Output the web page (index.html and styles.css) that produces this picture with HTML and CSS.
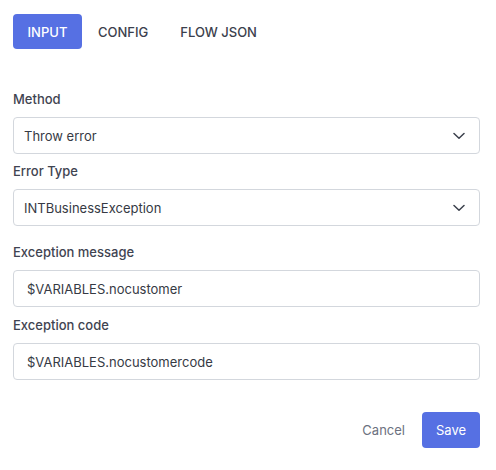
FILE: index.html
```html
<!DOCTYPE html>
<html>
<head>
<meta charset="utf-8">
<link rel="stylesheet" href="styles.css">
</head>
<body>
<div class="panel">
  <nav class="tabs">
    <button class="tab active">INPUT</button>
    <button class="tab">CONFIG</button>
    <button class="tab">FLOW JSON</button>
  </nav>
  <form class="form">
    <div class="field f-method">
      <label class="label">Method</label>
      <div class="control select"><span>Throw error</span>
        <svg class="chev" width="12" height="8" viewBox="0 0 12 8"><path d="M1 1.5 L6 6.2 L11 1.5" fill="none" stroke="#3b404c" stroke-width="1.5" stroke-linecap="round" stroke-linejoin="round"/></svg>
      </div>
    </div>
    <div class="field f-type">
      <label class="label">Error Type</label>
      <div class="control select"><span>INTBusinessException</span>
        <svg class="chev" width="12" height="8" viewBox="0 0 12 8"><path d="M1 1.5 L6 6.2 L11 1.5" fill="none" stroke="#3b404c" stroke-width="1.5" stroke-linecap="round" stroke-linejoin="round"/></svg>
      </div>
    </div>
    <div class="field f-msg">
      <label class="label">Exception message</label>
      <div class="control input">$VARIABLES.nocustomer</div>
    </div>
    <div class="field f-code">
      <label class="label">Exception code</label>
      <div class="control input">$VARIABLES.nocustomercode</div>
    </div>
    <div class="actions">
      <button type="button" class="btn-cancel">Cancel</button>
      <button type="button" class="btn-save">Save</button>
    </div>
  </form>
</div>
</body>
</html>
```
FILE: styles.css
```css
* { box-sizing: border-box; }
html, body { margin: 0; padding: 0; background: #fff; }
body { font-family: "Inter", "Noto Sans", sans-serif; color: #333740; width: 496px; height: 470px; overflow: hidden; }
.panel { padding: 14px 16px 0 13px; }
.tabs { display: flex; gap: 0; height: 36px; }
button { font-family: inherit; border: none; background: none; cursor: pointer; }
.tab { font-size: 13px; font-weight: 500; color: #3b404c; padding: 0 16px; height: 35px; border-radius: 4px; letter-spacing: 0; }
.tab.active { background: #5670e3; color: #fff; width: 69px; padding: 0; }
.tab:nth-child(3) { padding-left: 16px; }
.form { margin-top: 40px; display: flex; flex-direction: column; }
.field { display: flex; flex-direction: column; }
.label { font-size: 13px; font-weight: 500; color: #3f4451; line-height: 18px; margin-bottom: 9px; }
.control { height: 37px; border: 1px solid #d3d7dd; border-radius: 4px; font-size: 13px; color: #363a44; display: flex; align-items: center; }
.select { padding: 0 14px 0 10px; justify-content: space-between; }
.input { padding: 0 13px; }
.f-method { margin-top: 0; }
.f-type { margin-top: 8px; }
.f-msg { margin-top: 17px; }
.f-code { margin-top: 9px; }
.actions { display: flex; justify-content: flex-end; align-items: center; margin-top: 32px; gap: 0; }
.btn-cancel { font-size: 13px; color: #6c7180; padding: 0 17px; height: 36px; }
.btn-save { font-size: 13px; color: #fff; background: #5670e3; border-radius: 4px; width: 58px; height: 36px; }
```
